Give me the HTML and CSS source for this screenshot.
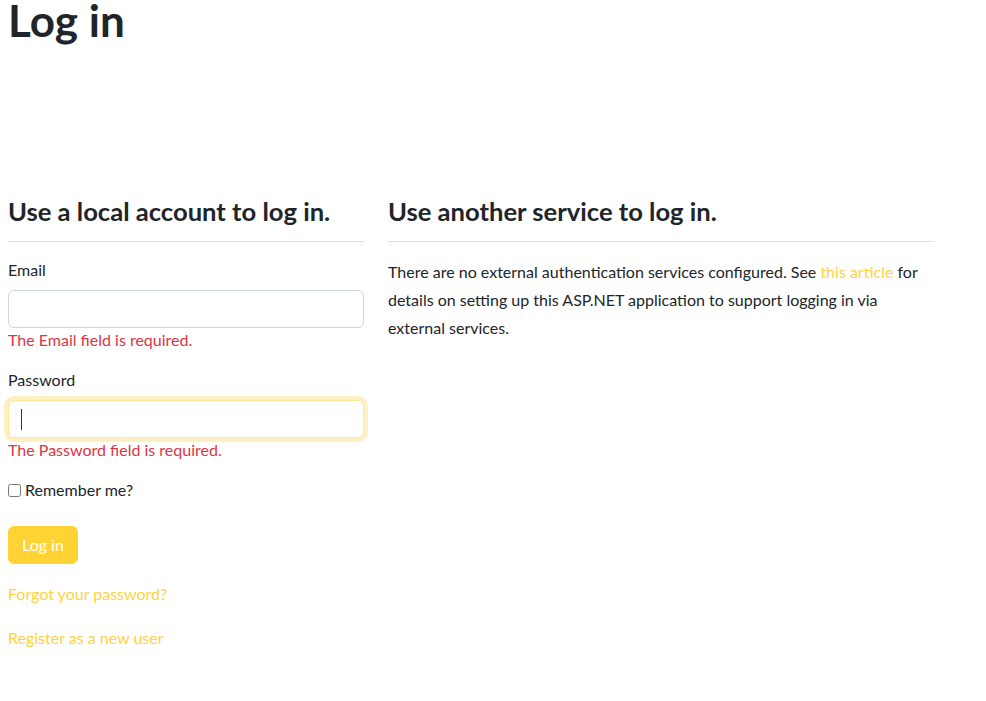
FILE: index.html
```html
<!DOCTYPE html>
<html lang="en">
<head>
<meta charset="utf-8">
<title>Log in</title>
<link rel="stylesheet" href="styles.css">
</head>
<body>
<h1 class="title">Log in</h1>
<div class="row">
  <section class="col-left">
    <h2 class="section-title">Use a local account to log in.</h2>
    <hr class="divider">
    <form class="login-form">
      <div class="field">
        <label class="field-label" for="email">Email</label>
        <input class="field-input" id="email" type="email">
        <span class="field-error">The Email field is required.</span>
      </div>
      <div class="field">
        <label class="field-label" for="password">Password</label>
        <div class="input-wrap">
          <input class="field-input is-focus" id="password" type="password">
          <span class="caret"></span>
        </div>
        <span class="field-error">The Password field is required.</span>
      </div>
      <div class="check">
        <input class="check-box" id="remember" type="checkbox">
        <label class="check-label" for="remember">Remember me?</label>
      </div>
      <div class="actions">
        <button class="btn" type="button">Log in</button>
      </div>
      <div class="links">
        <p class="link-p"><a class="link" href="#">Forgot your password?</a></p>
        <p class="link-p"><a class="link" href="#">Register as a new user</a></p>
      </div>
    </form>
  </section>
  <section class="col-right">
    <h2 class="section-title">Use another service to log in.</h2>
    <hr class="divider">
    <p class="info">There are no external authentication services configured. See <a class="link" href="#">this article</a> for details on setting up this ASP.NET application to support logging in via external services.</p>
  </section>
</div>
</body>
</html>
```
FILE: styles.css
```css
* { box-sizing: border-box; }
html, body { margin: 0; padding: 0; background: #fff; }
body {
  padding: 0 8px;
  font-family: "Lato", "Liberation Sans", sans-serif;
  font-size: 16px;
  line-height: 1.5;
  color: #212529;
}
.title {
  margin: 0 0 155px;
  font-size: 44px;
  line-height: 40px;
  font-weight: 700;
}
.row {
  display: flex;
  gap: 24px;
  align-items: flex-start;
}
.col-left { width: 356px; flex: none; }
.col-right { width: 546px; flex: none; }
.section-title {
  margin: 0 0 14px;
  font-size: 25.6px;
  line-height: 32px;
  font-weight: 700;
}
.divider {
  margin: 0 0 16px;
  border: 0;
  border-top: 1px solid #dfe0e1;
  height: 0;
}
.field { display: flex; flex-direction: column; margin-bottom: 16px; }
.field-label { line-height: 24px; margin-bottom: 8px; }
.input-wrap { position: relative; }
.field-input {
  display: block;
  width: 100%;
  height: 38px;
  padding: 6px 12px;
  font: inherit;
  border: 1px solid #ced4da;
  border-radius: 6px;
  background: #fff;
  outline: none;
}
.field-input.is-focus {
  border-color: #ffe79f;
  box-shadow: 0 0 0 4px #fff0c4;
}
.caret {
  position: absolute;
  left: 13px;
  top: 9px;
  width: 1px;
  height: 21px;
  background: #333;
}
.field-error { color: #dc3545; line-height: 24px; }
.check { display: flex; align-items: center; line-height: 24px; }
.check-box { margin: 0 4px 0 0; width: 13px; height: 13px; }
.actions { margin-top: 24px; }
.btn {
  font: inherit;
  line-height: 24px;
  padding: 6px 13px;
  color: #fff;
  background: #ffd333;
  border: 1px solid #ffd333;
  border-radius: 6px;
}
.links { margin-top: 16px; }
.link-p { margin: 0 0 16px; line-height: 28px; }
.link { color: #ffd23f; text-decoration: none; }
.info { margin: 0; line-height: 28px; }
```
